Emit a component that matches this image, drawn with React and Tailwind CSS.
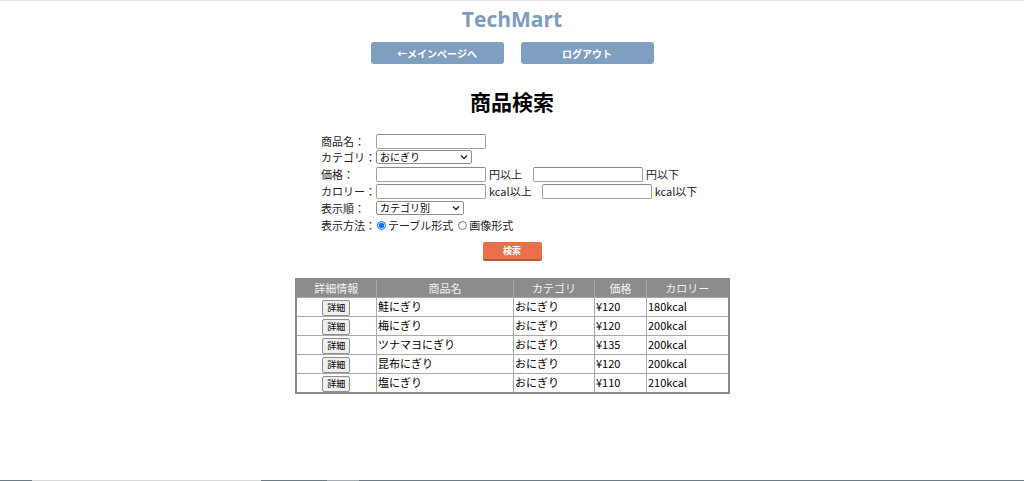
import React from 'react';

const jp = '"Noto Sans CJK JP", "Noto Sans", sans-serif';

const products = [
  { name: '鮭にぎり', category: 'おにぎり', price: '¥120', cal: '180kcal' },
  { name: '梅にぎり', category: 'おにぎり', price: '¥120', cal: '200kcal' },
  { name: 'ツナマヨにぎり', category: 'おにぎり', price: '¥135', cal: '200kcal' },
  { name: '昆布にぎり', category: 'おにぎり', price: '¥120', cal: '200kcal' },
  { name: '塩にぎり', category: 'おにぎり', price: '¥110', cal: '210kcal' },
];

function TextBox({ className = '' }) {
  return (
    <input
      type="text"
      className={`h-[15px] bg-white border border-[#a0a0a0] border-t-[#8a8a8a] rounded-[2px] outline-none ${className}`}
    />
  );
}

function FakeSelect({ value, width }) {
  return (
    <div
      className={`${width} h-[14px] flex items-center justify-between bg-white border border-[#8f8f8f] rounded-[2px] pl-[3px] pr-[3px] text-[10px] leading-none text-black`}
    >
      <span>{value}</span>
      <svg width="8" height="6" viewBox="0 0 8 6" fill="none">
        <path d="M1 1.5 L4 4.5 L7 1.5" stroke="#222" strokeWidth="1.3" />
      </svg>
    </div>
  );
}

function Row({ label, h, children }) {
  return (
    <div className={`flex items-center ${h}`}>
      <div className="w-[55px] shrink-0">{label}</div>
      {children}
    </div>
  );
}

export default function App() {
  return (
    <div
      className="h-[481px] flex flex-col bg-white border-t border-[#e3e3e3] text-[11px] text-[#222]"
      style={{ fontFamily: jp }}
    >
      <div
        className="mt-[5px] text-center text-[21px] leading-[26px] font-bold text-[#7d9dc0]"
        style={{ fontFamily: '"Open Sans", "Liberation Sans", sans-serif' }}
      >
        TechMart
      </div>

      <div className="mt-[10px] flex justify-center gap-[17px]">
        <button className="w-[133px] h-[22px] rounded-[3px] bg-[#7f9fc1] text-white text-[10px] font-bold">
          ←メインページへ
        </button>
        <button className="w-[133px] h-[22px] rounded-[3px] bg-[#7f9fc1] text-white text-[10px] font-bold">
          ログアウト
        </button>
      </div>

      <h1 className="mt-[24px] text-center text-[21px] leading-[26px] font-bold text-black">
        商品検索
      </h1>

      <div className="mt-[19px] w-[382px] mx-auto flex flex-col">
        <Row label="商品名：" h="h-[16px]">
          <TextBox className="w-[110px]" />
        </Row>
        <Row label="カテゴリ：" h="h-[16px]">
          <FakeSelect value="おにぎり" width="w-[96px]" />
        </Row>
        <Row label="価格：" h="h-[18px]">
          <TextBox className="w-[110px]" />
          <span className="ml-[3px]">円以上</span>
          <TextBox className="w-[110px] ml-[11px]" />
          <span className="ml-[3px]">円以下</span>
        </Row>
        <Row label="カロリー：" h="h-[17px]">
          <TextBox className="w-[110px]" />
          <span className="ml-[3px]">kcal以上</span>
          <TextBox className="w-[110px] ml-[10px]" />
          <span className="ml-[3px]">kcal以下</span>
        </Row>
        <Row label="表示順：" h="h-[16px]">
          <FakeSelect value="カテゴリ別" width="w-[88px]" />
        </Row>
        <Row label="表示方法：" h="h-[19px]">
          <label className="flex items-center">
            <input type="radio" name="view" defaultChecked className="w-[9px] h-[9px] m-0 ml-[1px] mr-[2px] accent-[#0075ff]" />
            テーブル形式
          </label>
          <label className="flex items-center ml-[5px]">
            <input type="radio" name="view" className="w-[9px] h-[9px] m-0 mr-[2px]" />
            画像形式
          </label>
        </Row>
      </div>

      <div className="mt-[7px] flex justify-center">
        <button className="w-[59px] h-[19px] bg-[#e8704b] border-b-2 border-[#b95a3c] rounded-[2px] text-white text-[9px] font-bold leading-none">
          検索
        </button>
      </div>

      <div className="mt-[17px] flex justify-center">
        <table className="border-collapse border-2 border-[#8a8a8a] text-[11px] text-black">
          <thead>
            <tr className="h-[18px] bg-[#8c8c8c] text-[#f2f2f2] font-normal">
              <th className="w-[81px] font-normal border border-[#aaa] p-0">詳細情報</th>
              <th className="w-[137px] font-normal border border-[#aaa] p-0">商品名</th>
              <th className="w-[81px] font-normal border border-[#aaa] p-0">カテゴリ</th>
              <th className="w-[52px] font-normal border border-[#aaa] p-0">価格</th>
              <th className="w-[82px] font-normal border border-[#aaa] p-0">カロリー</th>
            </tr>
          </thead>
          <tbody>
            {products.map((p) => (
              <tr key={p.name} className="h-[19px]">
                <td className="border border-[#aaa] p-0 text-center">
                  <button className="w-[28px] h-[16px] align-middle bg-[#efefef] border border-[#8f8f8f] rounded-[2px] text-[9px] leading-none text-black">
                    詳細
                  </button>
                </td>
                <td className="border border-[#aaa] p-0 pl-[1px]">{p.name}</td>
                <td className="border border-[#aaa] p-0 pl-[1px]">{p.category}</td>
                <td className="border border-[#aaa] p-0 pl-[1px]">{p.price}</td>
                <td className="border border-[#aaa] p-0 pl-[1px]">{p.cal}</td>
              </tr>
            ))}
          </tbody>
        </table>
      </div>

      <div className="flex-1" />
      <div className="h-px flex">
        <div className="w-[32px] bg-[#6c7a86]" />
        <div className="w-[229px] bg-[#d9d9d9]" />
        <div className="w-[66px] bg-[#6c7a86]" />
        <div className="w-[32px] bg-[#a3abb3]" />
        <div className="flex-1 bg-[#6c7a86]" />
      </div>
    </div>
  );
}
